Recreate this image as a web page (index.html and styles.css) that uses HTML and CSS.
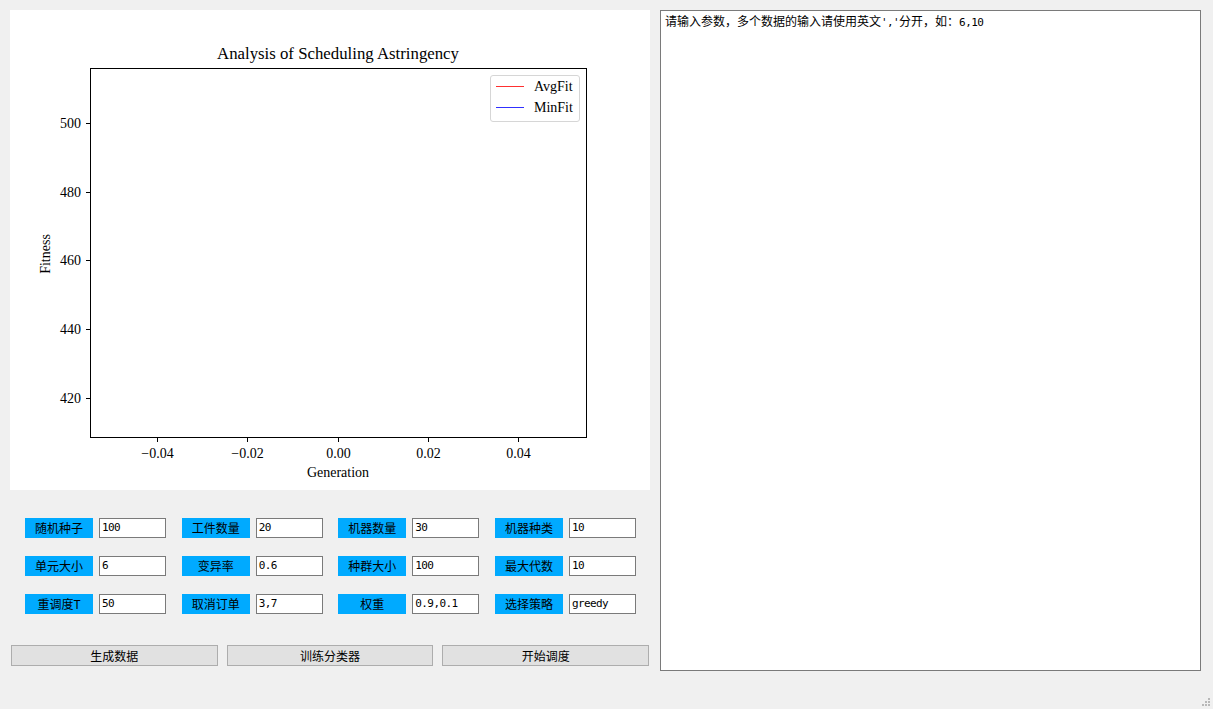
FILE: index.html
```html
<!DOCTYPE html>
<html>
<head>
<meta charset="utf-8">
<link rel="stylesheet" href="styles.css">
</head>
<body>
<div class="window">
  <div class="left">
    <div class="plot">
      <svg class="chart" width="640" height="480" viewBox="0 0 640 480">
        <text class="title" x="328" y="49" text-anchor="middle">Analysis of Scheduling Astringency</text>
        <rect x="80.5" y="58.5" width="496" height="369" fill="#fff" stroke="#000" stroke-width="1"/>
        <g stroke="#000" stroke-width="1">
          <line x1="76" y1="113.5" x2="80" y2="113.5"/>
          <line x1="76" y1="182.5" x2="80" y2="182.5"/>
          <line x1="76" y1="250.5" x2="80" y2="250.5"/>
          <line x1="76" y1="319.5" x2="80" y2="319.5"/>
          <line x1="76" y1="388.5" x2="80" y2="388.5"/>
          <line x1="147.5" y1="428" x2="147.5" y2="432"/>
          <line x1="237.5" y1="428" x2="237.5" y2="432"/>
          <line x1="328.5" y1="428" x2="328.5" y2="432"/>
          <line x1="418.5" y1="428" x2="418.5" y2="432"/>
          <line x1="508.5" y1="428" x2="508.5" y2="432"/>
        </g>
        <g class="tick" text-anchor="end">
          <text x="71" y="118">500</text>
          <text x="71" y="187">480</text>
          <text x="71" y="255">460</text>
          <text x="71" y="324">440</text>
          <text x="71" y="393">420</text>
        </g>
        <g class="tick" text-anchor="middle">
          <text x="147.5" y="448">−0.04</text>
          <text x="237.5" y="448">−0.02</text>
          <text x="328.5" y="448">0.00</text>
          <text x="418.5" y="448">0.02</text>
          <text x="508.5" y="448">0.04</text>
        </g>
        <text class="axis" x="328" y="467" text-anchor="middle">Generation</text>
        <text class="axis" transform="translate(40 244) rotate(-90)" text-anchor="middle">Fitness</text>
        <rect x="480.5" y="65.5" width="89" height="46" rx="2.5" fill="#fff" fill-opacity="0.8" stroke="#d6d6d6"/>
        <line x1="486" y1="76.5" x2="514" y2="76.5" stroke="#ff3030" stroke-width="1"/>
        <line x1="486" y1="97.5" x2="514" y2="97.5" stroke="#3030ff" stroke-width="1"/>
        <text class="tick" x="524" y="81">AvgFit</text>
        <text class="tick" x="524" y="102">MinFit</text>
      </svg>
    </div>
    <div class="params">
      <div class="field"><span class="label">随机种子</span><span class="input">100</span></div>
      <div class="field"><span class="label">工件数量</span><span class="input">20</span></div>
      <div class="field"><span class="label">机器数量</span><span class="input">30</span></div>
      <div class="field"><span class="label">机器种类</span><span class="input">10</span></div>
      <div class="field"><span class="label">单元大小</span><span class="input">6</span></div>
      <div class="field"><span class="label">变异率</span><span class="input">0.6</span></div>
      <div class="field"><span class="label">种群大小</span><span class="input">100</span></div>
      <div class="field"><span class="label">最大代数</span><span class="input">10</span></div>
      <div class="field"><span class="label">重调度T</span><span class="input">50</span></div>
      <div class="field"><span class="label">取消订单</span><span class="input">3,7</span></div>
      <div class="field"><span class="label">权重</span><span class="input">0.9,0.1</span></div>
      <div class="field"><span class="label">选择策略</span><span class="input">greedy</span></div>
    </div>
    <div class="buttons">
      <div class="btn">生成数据</div>
      <div class="btn">训练分类器</div>
      <div class="btn">开始调度</div>
    </div>
  </div>
  <div class="console">请输入参数，多个数据的输入请使用英文<span class="mono">','</span>分开，如：<span class="mono">6,10</span></div>
</div>
<svg class="grip" width="10" height="10" viewBox="0 0 10 10">
  <g fill="#b8b8b8">
    <rect x="7" y="1" width="2" height="2"/>
    <rect x="4" y="4" width="2" height="2"/>
    <rect x="7" y="4" width="2" height="2"/>
    <rect x="1" y="7" width="2" height="2"/>
    <rect x="4" y="7" width="2" height="2"/>
    <rect x="7" y="7" width="2" height="2"/>
  </g>
</svg>
</body>
</html>
```
FILE: styles.css
```css
html, body {
  margin: 0;
  padding: 0;
  background: #f0f0f0;
  width: 1213px;
  height: 709px;
  overflow: hidden;
  font-family: "Noto Sans CJK SC", sans-serif;
  font-size: 12px;
  color: #000;
}

.window {
  display: flex;
  gap: 10px;
  padding: 10px 0 0 10px;
}

.left {
  width: 640px;
  display: flex;
  flex-direction: column;
}

.plot {
  width: 640px;
  height: 480px;
  background: #fff;
}

.chart {
  display: block;
}

.chart text {
  font-family: "Liberation Serif", serif;
  fill: #000;
}

.chart .title {
  font-size: 16.8px;
}

.chart .tick,
.chart .tick text {
  font-size: 14px;
}

.chart .axis {
  font-size: 14px;
}

.params {
  display: grid;
  grid-template-columns: repeat(4, 141px);
  column-gap: 15.67px;
  row-gap: 18px;
  padding-left: 15px;
  margin-top: 28px;
}

.field {
  display: flex;
  gap: 6px;
  height: 20px;
}

.label {
  width: 68px;
  height: 20px;
  background: #00aaff;
  display: flex;
  align-items: center;
  justify-content: center;
  font-size: 12px;
  line-height: 20px;
}

.input {
  height: 18px;
  width: 63px;
  background: #fff;
  border: 1px solid #7a7a7a;
  font-family: "DejaVu Sans Mono", monospace;
  font-size: 11px;
  letter-spacing: -0.6px;
  line-height: 18px;
  padding-left: 2px;
}

.buttons {
  display: flex;
  gap: 9px;
  margin-top: 31px;
  margin-left: 1px;
  margin-right: 1px;
}

.btn {
  flex: 1;
  height: 19px;
  background: #e1e1e1;
  border: 1px solid #adadad;
  text-align: center;
  line-height: 19px;
  font-size: 12px;
}

.console {
  width: 533px;
  height: 655px;
  background: #fff;
  border: 1px solid #7a7a7a;
  padding: 2px 2px 2px 4px;
  font-size: 12px;
  line-height: 16px;
  white-space: nowrap;
}

.mono {
  font-family: "DejaVu Sans Mono", monospace;
  font-size: 11px;
  letter-spacing: -0.6px;
}

.grip {
  position: absolute;
  left: 1201px;
  top: 697px;
}
```
